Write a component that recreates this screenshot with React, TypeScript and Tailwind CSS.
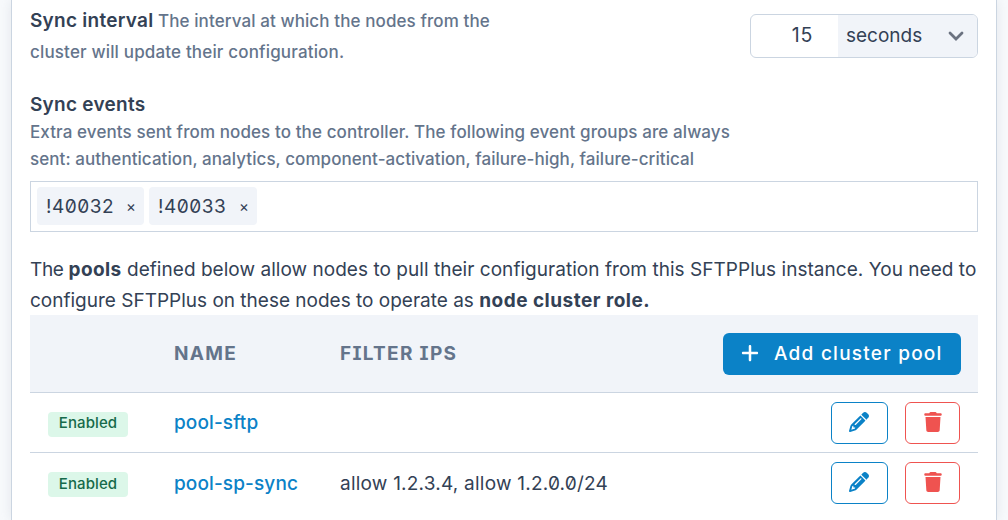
import { FaPencil, FaPlus, FaTrash } from 'react-icons/fa6';

interface IPool {
  name: string;
  filter: string;
}

const events = ['!40032', '!40033'];

const pools: IPool[] = [
  { name: 'pool-sftp', filter: '' },
  { name: 'pool-sp-sync', filter: 'allow 1.2.3.4, allow 1.2.0.0/24' },
];

const ChevronIcon = () => {
  return (
    <svg viewBox="0 0 16 10" className="h-2.5 w-4" fill="none" stroke="#6b7280" strokeWidth="2.8">
      <path d="M2 2l6 6 6-6" strokeLinecap="round" strokeLinejoin="miter" />
    </svg>
  );
};

const SyncInterval = () => {
  return (
    <section className="flex h-[84px] justify-between">
      <p className="pt-[5px] leading-[31px] whitespace-nowrap">
        <span className="text-[19px] font-semibold tracking-[0.26px]">Sync interval</span>{' '}
        <span className="text-[17px] font-medium text-[#64748b]">
          <span className="tracking-[0.1px]">The interval at which the nodes from the</span>
          <br />
          <span className="tracking-[0.16px]">cluster will update their configuration.</span>
        </span>
      </p>
      <div className="mt-[14px] flex h-11 w-[228px] overflow-hidden rounded-md border border-[#cbd5e1]">
        <span className="flex w-[87px] items-center justify-end pr-[25px] text-[19.5px] tracking-[0.7px]">15</span>
        <button className="flex flex-1 items-center justify-between bg-[#f1f4f9] pr-[13px] pl-2 text-[19px]">
          <span>seconds</span>
          <ChevronIcon />
        </button>
      </div>
    </section>
  );
};

const SyncEvents = () => {
  return (
    <section className="pt-[7px] whitespace-nowrap">
      <h2 className="text-[19px] leading-[27px] font-semibold tracking-[0.26px]">Sync events</h2>
      <p className="pt-px text-[17px] leading-[27px] font-medium text-[#64748b]">
        <span className="tracking-[0.1px]">
          Extra events sent from nodes to the controller. The following event groups are always
        </span>
        <br />
        <span className="tracking-[0.06px]">
          sent: authentication, analytics, component-activation, failure-high, failure-critical
        </span>
      </p>
      <ul className="mt-2 flex h-[51px] gap-[5px] border border-[#cbd5e1] px-1.5 py-[5px]">
        {events.map((event) => (
          <li
            key={event}
            className="flex h-[38px] w-[107px] items-center justify-between rounded bg-[#f1f4f9] pt-[2px] pr-2 pl-[9px] last:w-[108px]"
          >
            <span className="text-[19px] tracking-[0.5px]">{event}</span>
            <span className="text-[15px]">×</span>
          </li>
        ))}
      </ul>
    </section>
  );
};

const PoolRow = ({ data }: { data: IPool }) => {
  return (
    <li className="flex h-[60px] items-center border-b border-[#cbd5e1] px-[18px] last:border-b-0">
      <div className="w-[126px]">
        <span className="mt-[3px] flex h-[25px] w-20 items-center justify-center rounded bg-[#dcf7e9] pb-px text-[15px] font-medium tracking-[0.1px] text-[#166a4a]">
          Enabled
        </span>
      </div>
      <a href="#" className="w-[166px] pt-[2px] text-[19px] font-medium tracking-[0.12px] text-[#0b82c7]">
        {data.name}
      </a>
      <span className="flex-1 pt-[2px] text-[19px] tracking-[0.22px] whitespace-nowrap">{data.filter}</span>
      <button className="mr-[17px] flex h-[42px] w-[57px] items-center justify-center rounded-md border border-[#0b82c7] pr-px pb-[2px] text-[#0b82c7]">
        <FaPencil className="size-5" />
      </button>
      <button className="flex h-[42px] w-[55px] items-center justify-center rounded-md border border-[#ef5350] pb-[2px] text-[#ef5350]">
        <FaTrash className="size-5" />
      </button>
    </li>
  );
};

const App = () => {
  return (
    <main className="h-[520px] overflow-hidden bg-[#f8fafc] px-[11px] font-['Inter',sans-serif] text-[#334155] [font-feature-settings:'zero','cv08']">
      <div className="h-full border-x border-[#cbd5e1] bg-white px-[18px] shadow-[0_0_12px_rgba(100,116,139,0.15)]">
        <SyncInterval />
        <SyncEvents />
        <p className="mt-[22px] h-[61px] text-[19px] leading-[31px] whitespace-nowrap">
          <span className="tracking-[0.04px]">
            <span className="tracking-[-0.35px]">The </span>
            <b className="tracking-[0.4px]">pools</b> defined below allow nodes to pull their configuration from this
            SFTPPlus instance. You need to
          </span>
          <br />
          <span>
            configure SFTPPlus on these nodes to operate as <b className="tracking-[0.48px]">node cluster role.</b>
          </span>
        </p>
        <div className="flex h-[78px] items-center border-b border-[#cbd5e1] bg-[#f1f4f9] pr-[17px] pl-36 text-[19px]">
          <span className="w-[166px] pt-px font-bold tracking-[1.3px] text-[#64748b]">NAME</span>
          <span className="flex-1 pt-px font-bold tracking-[1.3px] text-[#64748b]">FILTER IPS</span>
          <button className="flex h-[42px] w-[238px] items-center rounded-md bg-[#0b82c7] pb-px pl-[17px] font-medium whitespace-nowrap text-white">
            <FaPlus className="mr-[14px] size-5" />
            <span className="pt-[2px] tracking-[1.25px]">Add cluster pool</span>
          </button>
        </div>
        <ul>
          {pools.map((pool) => (
            <PoolRow key={pool.name} data={pool} />
          ))}
        </ul>
      </div>
    </main>
  );
};

export default App;
